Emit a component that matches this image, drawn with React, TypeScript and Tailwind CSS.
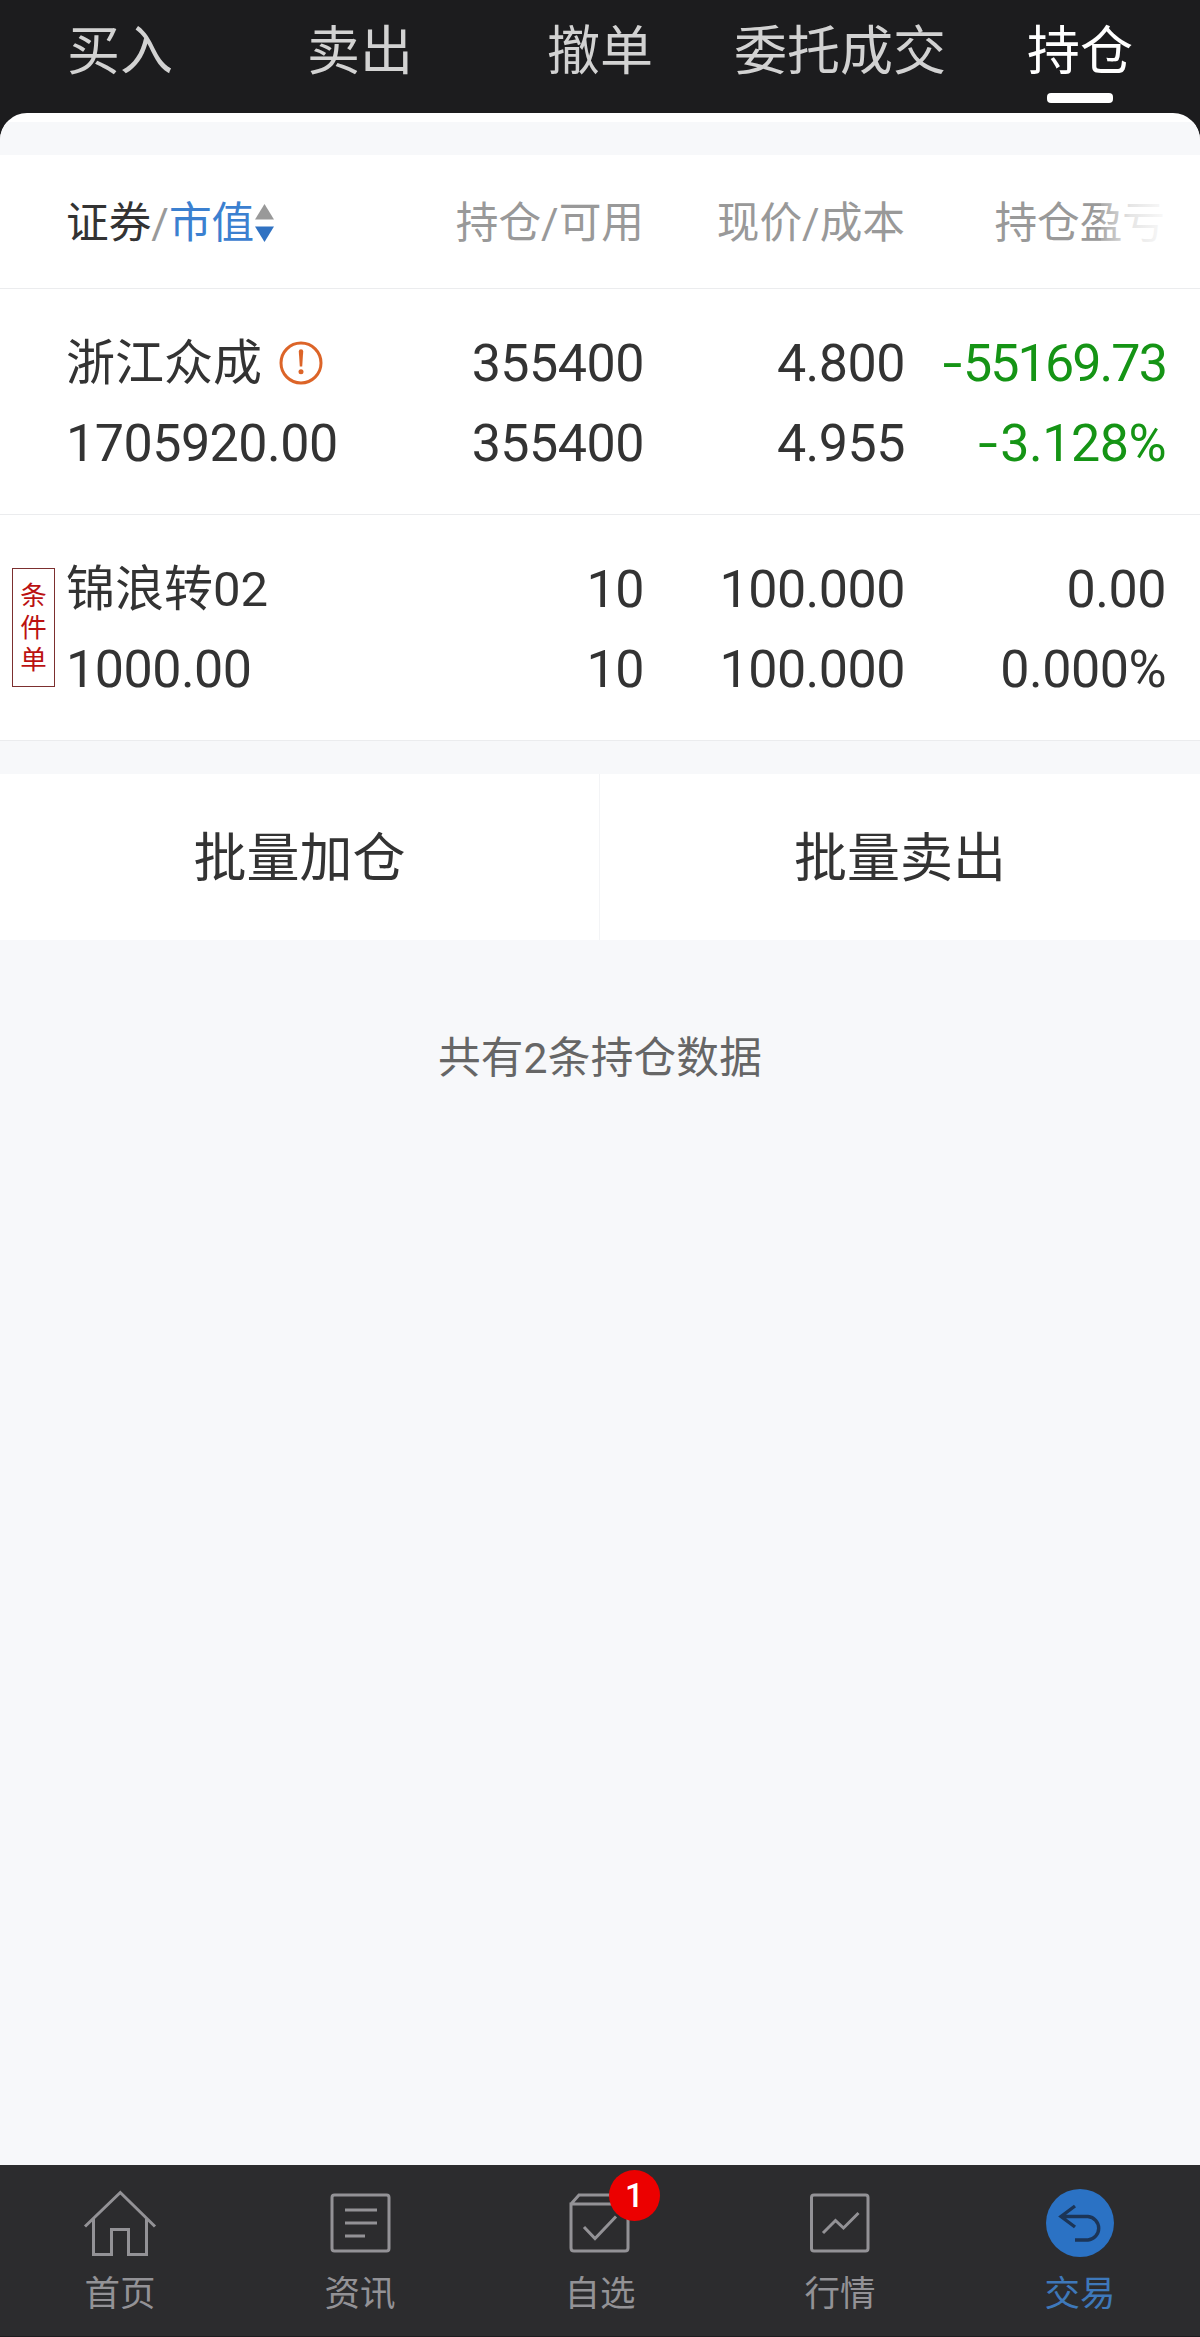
import React from 'react';

const tabs = ['买入', '卖出', '撤单', '委托成交', '持仓'];

type Holding = {
  name: string;
  value: string;
  warn?: boolean;
  tag?: string;
  qty: [string, string];
  price: [string, string];
  profit: [string, string];
  loss?: boolean;
};

const holdings: Holding[] = [
  {
    name: '浙江众成',
    value: '1705920.00',
    warn: true,
    qty: ['355400', '355400'],
    price: ['4.800', '4.955'],
    profit: ['-55169.73', '-3.128%'],
    loss: true,
  },
  {
    name: '锦浪转02',
    value: '1000.00',
    tag: '条件单',
    qty: ['10', '10'],
    price: ['100.000', '100.000'],
    profit: ['0.00', '0.000%'],
  },
];

function WarnIcon() {
  return (
    <svg className="mb-[3px] ml-[17px] h-11 w-11 shrink-0" viewBox="0 0 44 44" fill="none">
      <circle cx="22" cy="22" r="20" stroke="#dc6428" strokeWidth="3" />
      <path d="M19.8 10.5a2.2 2.2 0 0 1 4.4 0L23.2 25.5h-2.4z" fill="#dc6428" />
      <circle cx="22" cy="30.8" r="2.5" fill="#dc6428" />
    </svg>
  );
}

function SortIcon() {
  return (
    <svg className="ml-px h-[38px] w-[19px] shrink-0" viewBox="0 0 19 38">
      <path d="M9.5 0 19 15.5H0z" fill="#999" />
      <path d="M0 22.5h19L9.5 38z" fill="#3072c2" />
    </svg>
  );
}

function Amount({ text, tight }: { text: string; tight?: boolean }) {
  const negative = text.startsWith('-');
  const digits = negative ? text.slice(1) : text;
  return (
    <div className={tight ? 'flex justify-end tracking-[-1.9px]' : 'flex justify-end'}>
      {negative && <span className="mr-[3px] inline-block origin-right scale-x-[1.35]">-</span>}
      <span>{digits}</span>
    </div>
  );
}

function HoldingRow({ h }: { h: Holding }) {
  return (
    <div className="relative flex h-[226px] border-b border-[#ebecee] pt-[35px] pl-[66px] text-[52px] leading-[80px] tracking-[-0.5px] text-[#333]">
      {h.tag && (
        <div className="absolute top-[53px] left-3 flex h-[119px] w-[43px] flex-col items-center justify-center border border-[#7c2f2f] text-[26.5px] leading-8 tracking-normal text-[#bb1111]">
          {h.tag.split('').map((c) => (
            <span key={c}>{c}</span>
          ))}
        </div>
      )}
      <div className="w-[318px]">
        <div className="flex h-20 items-center text-[49px] tracking-normal">
          <span className="whitespace-nowrap">{h.name}</span>
          {h.warn && <WarnIcon />}
        </div>
        <div>{h.value}</div>
      </div>
      <div className="w-[260px] text-right">
        <div>{h.qty[0]}</div>
        <div>{h.qty[1]}</div>
      </div>
      <div className="w-[261px] text-right">
        <div>{h.price[0]}</div>
        <div>{h.price[1]}</div>
      </div>
      <div className={h.loss ? 'w-[261px] text-[#159415]' : 'w-[261px]'}>
        <Amount text={h.profit[0]} tight={h.loss} />
        <Amount text={h.profit[1]} />
      </div>
    </div>
  );
}

const iconClass = 'h-[70px] w-[80px]';

function HomeIcon() {
  return (
    <svg className={iconClass} viewBox="0 0 80 70" fill="none" stroke="#939296" strokeWidth="3">
      <path d="M5 38.5 40.3 4.5 75 38.5" />
      <path d="M13.5 31v35.5h18V41.5h17v25H66.500V31" />
    </svg>
  );
}

function NewsIcon() {
  return (
    <svg className={iconClass} viewBox="0 0 80 70" fill="none" stroke="#939296" strokeWidth="3">
      <rect x="12" y="7" width="57" height="56" rx="2.500" />
      <path d="M25 22h32M25 35h32M25 48h20" />
    </svg>
  );
}

function PickIcon() {
  return (
    <svg className={iconClass} viewBox="0 0 80 70" fill="none" stroke="#939296" strokeWidth="3">
      <path d="M11 16v44q0 3 3 3h51q3 0 3-3V16zL19 7h42l7 9" />
      <path d="M24 39 35 50.500 56 28.500" />
    </svg>
  );
}

function MarketIcon() {
  return (
    <svg className={iconClass} viewBox="0 0 80 70" fill="none" stroke="#939296" strokeWidth="3">
      <rect x="11.500" y="7" width="56.500" height="56" rx="2.500" />
      <path d="M23 45 35.500 32.500 43.500 40 58.500 25" />
    </svg>
  );
}

function TradeIcon() {
  return (
    <svg className={iconClass} viewBox="0 0 80 70" fill="none">
      <circle cx="40" cy="35" r="34" fill="#2b72c4" />
      <path
        d="M35 18 21 28.500 35 39M21 28.500H48a11.800 11.800 0 0 1 0 23.500H35"
        stroke="#1c3557"
        strokeWidth="3.400"
      />
    </svg>
  );
}

const nav = [
  { label: '首页', icon: <HomeIcon /> },
  { label: '资讯', icon: <NewsIcon /> },
  { label: '自选', icon: <PickIcon />, badge: '1' },
  { label: '行情', icon: <MarketIcon /> },
  { label: '交易', icon: <TradeIcon />, active: true },
];

export default function App() {
  return (
    <div className="flex h-[2337px] w-[1200px] flex-col overflow-hidden bg-[#f7f8fa] font-['Roboto','Noto_Sans_CJK_SC',sans-serif]">
      <div className="bg-[#1c1c1e]">
        <div className="grid h-[113px] grid-cols-5">
          {tabs.map((t) => {
            const active = t === '持仓';
            return (
              <div
                key={t}
                className={
                  active
                    ? 'flex flex-col items-center pt-3 text-[53px] leading-[80px] text-white'
                    : 'flex flex-col items-center pt-3 text-[53px] leading-[80px] text-[#d2d2d2]'
                }
              >
                <span className="whitespace-nowrap">{t}</span>
                {active && <span className="mt-px h-[10px] w-[66px] rounded-[4px] bg-white" />}
              </div>
            );
          })}
        </div>
        <div className="h-[42px] overflow-hidden rounded-t-[27px] bg-white pt-[9px]">
          <div className="h-full bg-[#f7f8fa]" />
        </div>
      </div>

      <div className="bg-white">
        <div className="relative flex h-[134px] items-center border-b border-[#ebecee] pt-[3px] pl-[66px] text-[42.67px] leading-[60px] text-[#999]">
          <div className="flex w-[318px] items-center">
            <span className="text-[#333]">证券</span>
            <span>/</span>
            <span className="text-[#3b80d0]">市值</span>
            <SortIcon />
          </div>
          <div className="w-[260px] text-right">持仓/可用</div>
          <div className="w-[261px] text-right">现价/成本</div>
          <div className="w-[260px] text-right">持仓盈亏</div>
          <div className="absolute top-0 right-0 h-[132px] w-[99px] bg-linear-to-r from-white/15 via-white/75 via-30% to-white to-75%" />
        </div>
        {holdings.map((h) => (
          <HoldingRow key={h.name} h={h} />
        ))}
      </div>

      <div className="mt-[33px] grid h-[166px] grid-cols-2 bg-white text-[53px] text-[#333]">
        <div className="flex items-center justify-center border-r border-[#f3f4f6] pt-[5px]">批量加仓</div>
        <div className="flex items-center justify-center pt-[5px]">批量卖出</div>
      </div>

      <div className="mt-[88px] text-center text-[42.67px] leading-[60px] tracking-[0.2px] text-[#666]">共有2条持仓数据</div>

      <div className="mt-auto grid h-[172px] grid-cols-5 border-b border-[#1c1c1e] bg-[#2c2c2e]">
        {nav.map((n) => (
          <div
            key={n.label}
            className={
              n.active
                ? 'flex flex-col items-center pt-[23px] text-[35.5px] leading-[50px] text-[#3e78ba]'
                : 'flex flex-col items-center pt-[23px] text-[35.5px] leading-[50px] text-[#939296]'
            }
          >
            <div className="relative">
              {n.icon}
              {n.badge && (
                <span className="absolute -top-[18px] left-[49px] flex h-[51px] w-[51px] items-center justify-center rounded-full bg-[#ec0000] text-[33px] font-medium text-white">
                  {n.badge}
                </span>
              )}
            </div>
            <span className="mt-[11px]">{n.label}</span>
          </div>
        ))}
      </div>
    </div>
  );
}
